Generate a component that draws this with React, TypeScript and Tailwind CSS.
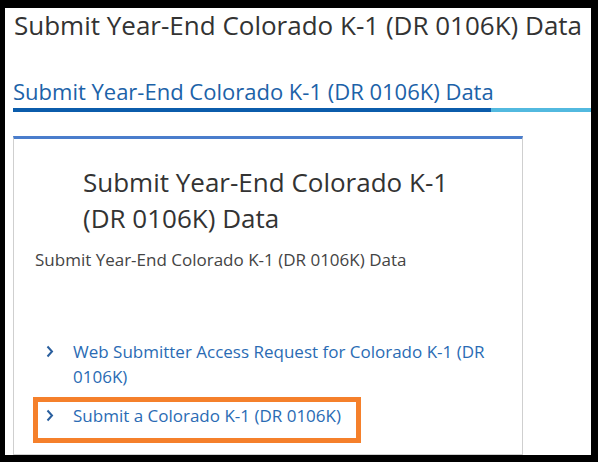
export default function App() {
  return (
    <div className="w-[598px] h-[462px] bg-black pt-2 pl-[5px] pr-[7px] pb-[7px] font-['Open_Sans',sans-serif]">
      <div className="h-full bg-white flex flex-col overflow-hidden">
        <h1 className="pl-[9px] text-[26px] leading-[34px] text-[#333] whitespace-nowrap">
          Submit Year-End Colorado K-1 (DR 0106K) Data
        </h1>

        <h2 className="mt-[35px] pl-2 text-[22px] leading-[28px] text-[#1c62a8] whitespace-nowrap">
          Submit Year-End Colorado K-1 (DR 0106K) Data
        </h2>
        <div className="mt-[3px] ml-2 flex h-1">
          <div className="w-[478px] bg-[#0b5cab]" />
          <div className="flex-1 bg-[#52b9df]" />
        </div>

        <div className="mt-6 ml-2 w-[510px] flex-1 border-x border-b border-t-[3px] border-x-[#cfcfcf] border-b-[#cfcfcf] border-t-[#4a7dcc] pt-[25px]">
          <h3 className="pl-[69px] pr-[60px] text-[26px] leading-[36px] text-[#333]">
            Submit Year-End Colorado K-1 (DR 0106K) Data
          </h3>
          <p className="mt-3 pl-[21px] text-[17px] leading-6 text-[#444]">
            Submit Year-End Colorado K-1 (DR 0106K) Data
          </p>

          <ul className="mt-[62px] text-[17px] leading-[25px] text-[#2a6bb4]">
            <li className="flex ml-[19px] mr-4 border-[5px] border-transparent">
              <span className="w-[35px] shrink-0 pl-2">
                <Chevron />
              </span>
              <span>Web Submitter Access Request for Colorado K-1 (DR 0106K)</span>
            </li>
            <li className="mt-[3px] flex w-[328px] ml-[19px] border-[5px] border-[#f5802b] pt-px pb-[10px]">
              <span className="w-[35px] shrink-0 pl-2">
                <Chevron />
              </span>
              <span>Submit a Colorado K-1 (DR 0106K)</span>
            </li>
          </ul>
        </div>
      </div>
    </div>
  );
}

function Chevron() {
  return (
    <svg width="8" height="25" viewBox="0 0 8 25" className="block">
      <path d="M1.5 7.5 L6 12.5 L1.5 17.5" fill="none" stroke="#2a5f9e" strokeWidth="2" />
    </svg>
  );
}
